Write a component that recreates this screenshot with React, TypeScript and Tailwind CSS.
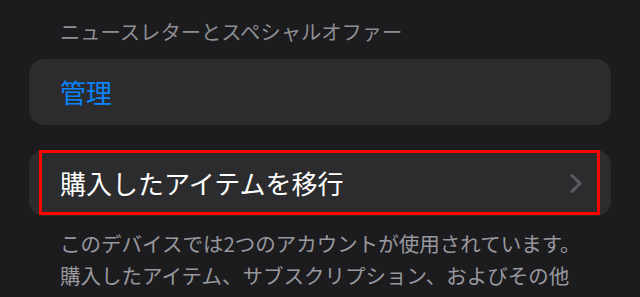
const FONT = { fontFamily: '"Noto Sans CJK JP", "Noto Sans", sans-serif' };

function Chevron() {
  return (
    <svg width="14" height="21" viewBox="0 0 14 21" fill="none" className="shrink-0">
      <polyline
        points="3,2.5 11,10.5 3,18.5"
        stroke="#5b5b60"
        strokeWidth="3"
        strokeLinecap="round"
        strokeLinejoin="round"
      />
    </svg>
  );
}

export default function App() {
  return (
    <div className="w-[640px] h-[297px] overflow-hidden bg-[#1c1c1e] px-[29px]" style={FONT}>
      <div className="pt-[19px] pb-[16px] pl-[31px] text-[20.3px] leading-[24px] text-[#8e8e93]">
        ニュースレターとスペシャルオファー
      </div>

      <div className="h-[66px] rounded-[15px] bg-[#2c2c2e] flex items-center px-[31px]">
        <span className="text-[26px] leading-[30px] text-[#0a84ff]">管理</span>
      </div>

      <div className="relative mt-[25px] h-[66px] rounded-[15px] bg-[#2c2c2e] flex items-center justify-between pl-[31px] pr-[28px]">
        <span className="text-[26px] leading-[30px] text-white">購入したアイテムを移行</span>
        <Chevron />
        {/* annotation box */}
        <div className="absolute left-[10px] right-[11px] top-0 bottom-[1px] border-[3px] border-[#ff0000] pointer-events-none" />
      </div>

      <div className="pt-[11px] pl-[31px] text-[20.5px] leading-[32px] text-[#98989e] whitespace-nowrap">
        このデバイスでは2つのアカウントが使用されています。
        <br />
        購入したアイテム、サブスクリプション、およびその他
      </div>
    </div>
  );
}
